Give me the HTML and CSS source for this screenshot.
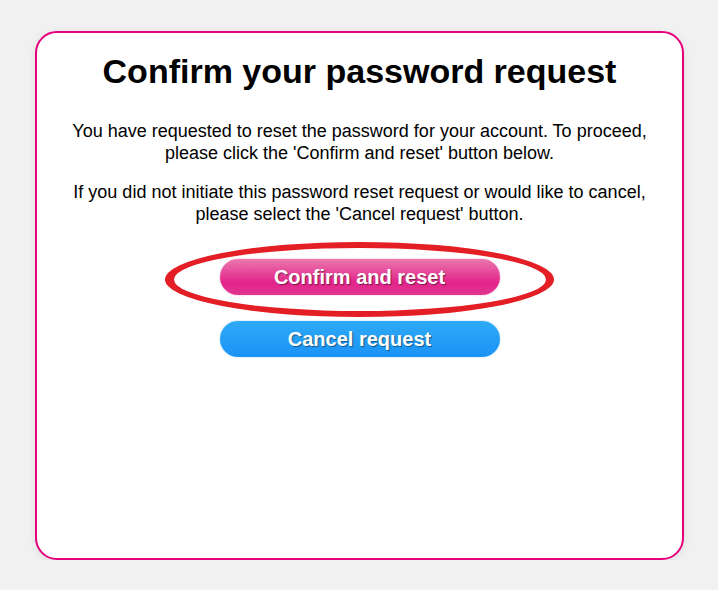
FILE: index.html
```html
<!DOCTYPE html>
<html>
<head>
<meta charset="utf-8">
<link rel="stylesheet" href="styles.css">
</head>
<body>
<div class="card">
  <h1 class="title">Confirm your password request</h1>
  <p class="text">You have requested to reset the password for your account. To proceed, please click the 'Confirm and reset' button below.</p>
  <p class="text">If you did not initiate this password reset request or would like to cancel, please select the 'Cancel request' button.</p>
  <div class="actions">
    <div class="confirm-wrap">
      <button class="btn btn-confirm">Confirm and reset</button>
      <span class="highlight"></span>
    </div>
    <button class="btn btn-cancel">Cancel request</button>
  </div>
</div>
</body>
</html>
```
FILE: styles.css
```css
html, body {
  margin: 0;
  padding: 0;
  background: #f1f1f1;
  font-family: "Liberation Sans", Arial, sans-serif;
}
body {
  padding: 31px 0 0 35px;
}
.card {
  box-sizing: border-box;
  width: 649px;
  height: 529px;
  background: #fff;
  border: 2px solid #e6007e;
  border-radius: 22px;
  box-shadow: 0 2px 8px rgba(0,0,0,0.08);
  padding: 18px 20px 0;
  text-align: center;
}
.title {
  margin: 0 0 29px;
  font-size: 34px;
  font-weight: bold;
  line-height: 40px;
  color: #000;
}
.text {
  margin: 0 0 17px;
  font-size: 18px;
  line-height: 22px;
  color: #000;
}
.actions {
  display: flex;
  flex-direction: column;
  align-items: center;
  gap: 26px;
  margin-top: 34px;
}
.confirm-wrap {
  position: relative;
}
.btn {
  display: block;
  width: 280px;
  height: 36px;
  border: none;
  border-radius: 18px;
  color: #fff;
  font-family: "Liberation Sans", Arial, sans-serif;
  font-weight: bold;
  font-size: 20px;
  text-shadow: 1px 1px 1px rgba(0,0,0,0.45);
  padding: 0;
}
.btn-confirm {
  background: linear-gradient(#ea78ad, #e2248b 65%, #e0358f);
  box-shadow: 0 0 2px rgba(226,36,139,0.4);
}
.btn-cancel {
  background: linear-gradient(#2eaaf6, #1a92f6);
  box-shadow: 0 0 2px rgba(26,146,246,0.4);
}
.highlight {
  position: absolute;
  left: -55px;
  top: -17px;
  width: 372px;
  height: 63px;
  border-style: solid;
  border-color: #e31e24;
  border-width: 6px 8px 6px 9px;
  border-radius: 50%;
  pointer-events: none;
}
```
